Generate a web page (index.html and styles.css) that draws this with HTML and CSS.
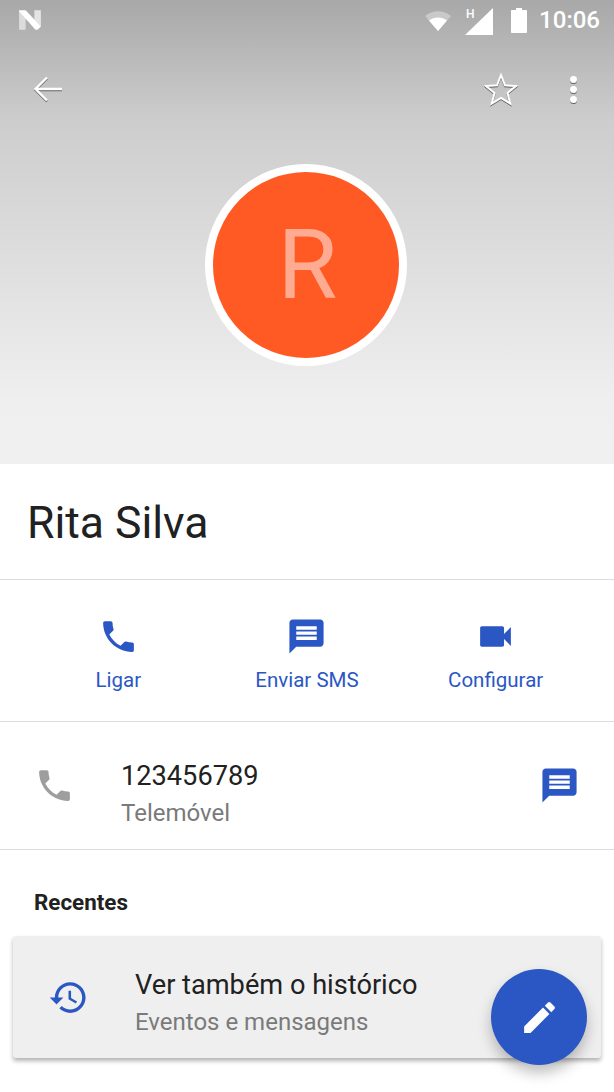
FILE: index.html
```html
<!DOCTYPE html>
<html>
	<head>
		<meta charset="utf-8">
		<title>Rita Silva</title>
		<link rel="stylesheet" href="styles.css">
	</head>
	<body>
		<div id="container">
			<div class="header">
				<div class="statusbar">
					<svg class="ic-n" viewBox="0 0 22 22"><path d="M1 2v18h6V8z" fill="#dcdcdc"/><path d="M15 2h6v15l-6-6z" fill="#e4e4e4"/><path d="M1 2h6l14 15-3 3h-2L1 3z" fill="#fff"/></svg>
					<div class="status-right">
						<svg class="ic-wifi" viewBox="0 0 26 20"><path d="M13 20L0 5c7-6.500 19-6.500 26 0z" fill="#fff" opacity=".35"/><path d="M13 20L4 9.500c5-4 13-4 18 0z" fill="#fff"/></svg>
						<div class="signal">
							<span class="h-mark">H</span>
							<svg class="ic-signal" viewBox="0 0 28 27"><path d="M28 0v27H0z" fill="#fff"/></svg>
						</div>
						<svg class="ic-batt" viewBox="0 0 16 25"><path d="M5 0h6v2h4c.6 0 1 .4 1 1v21c0 .6-.4 1-1 1H1c-.6 0-1-.4-1-1V3c0-.6.4-1 1-1h4z" fill="#fff"/></svg>
						<span class="clock">10:06</span>
					</div>
				</div>
				<div class="toolbar">
					<svg class="ic-back" viewBox="0 0 32 32"><path d="M30 16H4M15 4.500L3.500 16 15 27.500" fill="none" stroke="#fff" stroke-width="2.400"/></svg>
					<div class="toolbar-right">
						<svg class="ic-star" viewBox="0 0 34 34"><path d="M17 3l4 10.300 11 .7-8.500 7 2.800 10.700L17 26l-9.300 5.700L10.500 21 2 14l11-.7z" fill="none" stroke="#fff" stroke-width="2"/></svg>
						<div class="dots"><i></i><i></i><i></i></div>
					</div>
				</div>
				<div class="avatar"><span>R</span></div>
			</div>

			<div class="name">Rita Silva</div>

			<div class="actions">
				<div class="action">
					<svg class="icon blue" viewBox="0 0 24 24"><path d="M6.620 10.790c1.440 2.830 3.760 5.140 6.590 6.590l2.200-2.200c.27-.27.67-.36 1.020-.24 1.120.37 2.330.57 3.570.57.55 0 1 .45 1 1V20c0 .55-.45 1-1 1-9.390 0-17-7.610-17-17 0-.55.45-1 1-1h3.500c.55 0 1 .45 1 1 0 1.250.2 2.450.57 3.570.11.35.03.74-.25 1.020l-2.200 2.200z"/></svg>
					<span>Ligar</span>
				</div>
				<div class="action">
					<svg class="icon blue" viewBox="0 0 24 24"><path d="M20 2H4c-1.100 0-1.990.9-1.990 2L2 22l4-4h14c1.100 0 2-.9 2-2V4c0-1.100-.9-2-2-2zm-2 12H6v-2h12v2zm0-3H6V9h12v2zm0-3H6V6h12v2z"/></svg>
					<span>Enviar SMS</span>
				</div>
				<div class="action">
					<svg class="icon blue" viewBox="0 0 24 24"><path d="M17 10.500V7c0-.55-.45-1-1-1H4c-.55 0-1 .45-1 1v10c0 .55.45 1 1 1h12c.55 0 1-.45 1-1v-3.500l4 4v-11l-4 4z"/></svg>
					<span>Configurar</span>
				</div>
			</div>

			<div class="phone-row">
				<svg class="icon grey" viewBox="0 0 24 24"><path d="M6.620 10.790c1.440 2.830 3.760 5.140 6.590 6.590l2.200-2.200c.27-.27.67-.36 1.020-.24 1.120.37 2.330.57 3.570.57.55 0 1 .45 1 1V20c0 .55-.45 1-1 1-9.390 0-17-7.610-17-17 0-.55.45-1 1-1h3.500c.55 0 1 .45 1 1 0 1.250.2 2.450.57 3.570.11.35.03.74-.25 1.020l-2.200 2.200z"/></svg>
				<div class="phone-text">
					<div class="line1">123456789</div>
					<div class="line2">Telemóvel</div>
				</div>
				<svg class="icon blue" viewBox="0 0 24 24"><path d="M20 2H4c-1.100 0-1.990.9-1.990 2L2 22l4-4h14c1.100 0 2-.9 2-2V4c0-1.100-.9-2-2-2zm-2 12H6v-2h12v2zm0-3H6V9h12v2zm0-3H6V6h12v2z"/></svg>
			</div>

			<div class="recent-title">Recentes</div>

			<div class="card">
				<svg class="icon blue" viewBox="0 0 24 24"><path d="M13 3c-4.970 0-9 4.030-9 9H1l3.890 3.890.07.14L9 12H6c0-3.870 3.130-7 7-7s7 3.130 7 7-3.130 7-7 7c-1.930 0-3.680-.79-4.940-2.060l-1.420 1.420C8.270 19.990 10.510 21 13 21c4.970 0 9-4.030 9-9s-4.030-9-9-9zm-1 5v5l4.280 2.540.72-1.210-3.500-2.080V8H12z"/></svg>
				<div class="card-text">
					<div class="line1">Ver também o histórico</div>
					<div class="line2">Eventos e mensagens</div>
				</div>
			</div>

			<div class="fab">
				<svg viewBox="0 0 24 24"><path fill="#fff" d="M3 17.250V21h3.750L17.810 9.940l-3.750-3.750L3 17.250zM20.710 7.040c.39-.39.39-1.020 0-1.410l-2.340-2.340c-.39-.39-1.020-.39-1.410 0l-1.830 1.830 3.750 3.750 1.830-1.830z"/></svg>
			</div>
		</div>
	</body>
</html>
```

FILE: styles.css
```css
html, body {
	margin: 0;
	padding: 0;
	height: 100%;
	overflow: hidden;
	background-color: #fff;
}
#container {
	position: relative;
	height: 1092px;
	font-family: Roboto, "Liberation Sans", sans-serif;
	color: #212121;
}

/* header with the gradient */
.header {
	height: 464px;
	display: flex;
	flex-direction: column;
	align-items: center;
	background: linear-gradient(#a8a8a8, #cdcdcd 120px, #efefef 400px, #f0f0f0);
}
.statusbar {
	box-sizing: border-box;
	width: 100%;
	height: 40px;
	padding: 0 14px 0 18px;
	display: flex;
	align-items: center;
	justify-content: space-between;
}
.status-right {
	display: flex;
	align-items: center;
}
.ic-n {
	width: 24px;
	height: 24px;
}
.ic-wifi {
	width: 28px;
	height: 20px;
	margin-top: 2px;
}
.signal {
	position: relative;
	margin-left: 13px;
	width: 28px;
	height: 28px;
}
.h-mark {
	position: absolute;
	left: 1px;
	top: 1px;
	font-size: 12px;
	font-weight: 500;
	color: #fff;
}
.ic-signal {
	position: absolute;
	left: 0;
	top: 2px;
	width: 28px;
	height: 27px;
}
.ic-batt {
	width: 16px;
	height: 25px;
	margin-left: 18px;
}
.clock {
	margin-left: 12px;
	font-size: 24px;
	font-weight: 500;
	color: #fff;
}

.toolbar {
	box-sizing: border-box;
	width: 100%;
	height: 42px;
	margin-top: 28px;
	padding: 0 37px 0 32px;
	display: flex;
	align-items: center;
	justify-content: space-between;
	filter: drop-shadow(0 1px 0 rgba(0,0,0,.5));
}
.toolbar-right {
	display: flex;
	align-items: center;
	gap: 52px;
}
.ic-back {
	width: 32px;
	height: 32px;
}
.ic-star {
	width: 34px;
	height: 34px;
}
.dots {
	display: flex;
	flex-direction: column;
	gap: 3px;
}
.dots i {
	display: block;
	width: 7px;
	height: 7px;
	border-radius: 50%;
	background-color: #fff;
}

.avatar {
	box-sizing: border-box;
	width: 202px;
	height: 202px;
	margin: 54px 2px 0 0;
	border: 8px solid #fff;
	border-radius: 50%;
	background-color: #ff5a23;
	display: flex;
	align-items: center;
	justify-content: center;
	font-size: 97px;
	color: #ffab91;
}
.avatar span {
	margin-left: 3px;
}

.name {
	box-sizing: border-box;
	height: 116px;
	padding: 1px 0 0 27px;
	line-height: 116px;
	font-size: 44.5px;
	border-bottom: 1px solid #dcdcdc;
}

.actions {
	box-sizing: border-box;
	height: 142px;
	padding: 36px 24px 0;
	display: grid;
	grid-template-columns: 1fr 1fr 1fr;
	border-bottom: 1px solid #dcdcdc;
}
.action {
	display: flex;
	flex-direction: column;
	align-items: center;
	font-size: 20.5px;
	color: #2b57c4;
}
.action span {
	margin-top: 11px;
}

.icon {
	display: block;
	flex: none;
	width: 41px;
	height: 41px;
}
.blue { fill: #2b57c4; }
.grey { fill: #9e9e9e; }

.phone-row {
	box-sizing: border-box;
	height: 128px;
	padding: 0 34px;
	display: flex;
	align-items: center;
	border-bottom: 1px solid #dcdcdc;
}
.phone-text {
	flex: 1;
	margin-left: 46px;
	padding-top: 17px;
}
.line1 {
	font-size: 27.2px;
	line-height: 38px;
}
.line2 {
	font-size: 24px;
	line-height: 37px;
	color: #7a7a7a;
}

.recent-title {
	padding: 37px 0 0 34px;
	font-size: 22.4px;
	font-weight: 700;
	line-height: 30px;
}

.card {
	box-sizing: border-box;
	height: 122px;
	margin: 19px 13px 0 13px;
	padding: 0 0 0 35px;
	display: flex;
	align-items: center;
	border-radius: 3px;
	background-color: #efefef;
	box-shadow: 0 3px 4px rgba(0,0,0,.3);
}
.card-text {
	margin-left: 46px;
	padding-top: 13px;
}

.fab {
	position: absolute;
	left: 491px;
	top: 969px;
	width: 96px;
	height: 96px;
	border-radius: 50%;
	background-color: #2b57c4;
	display: flex;
	align-items: center;
	justify-content: center;
	box-shadow: 0 8px 14px rgba(0,0,0,.25);
}
.fab svg {
	width: 41px;
	height: 41px;
}
```
